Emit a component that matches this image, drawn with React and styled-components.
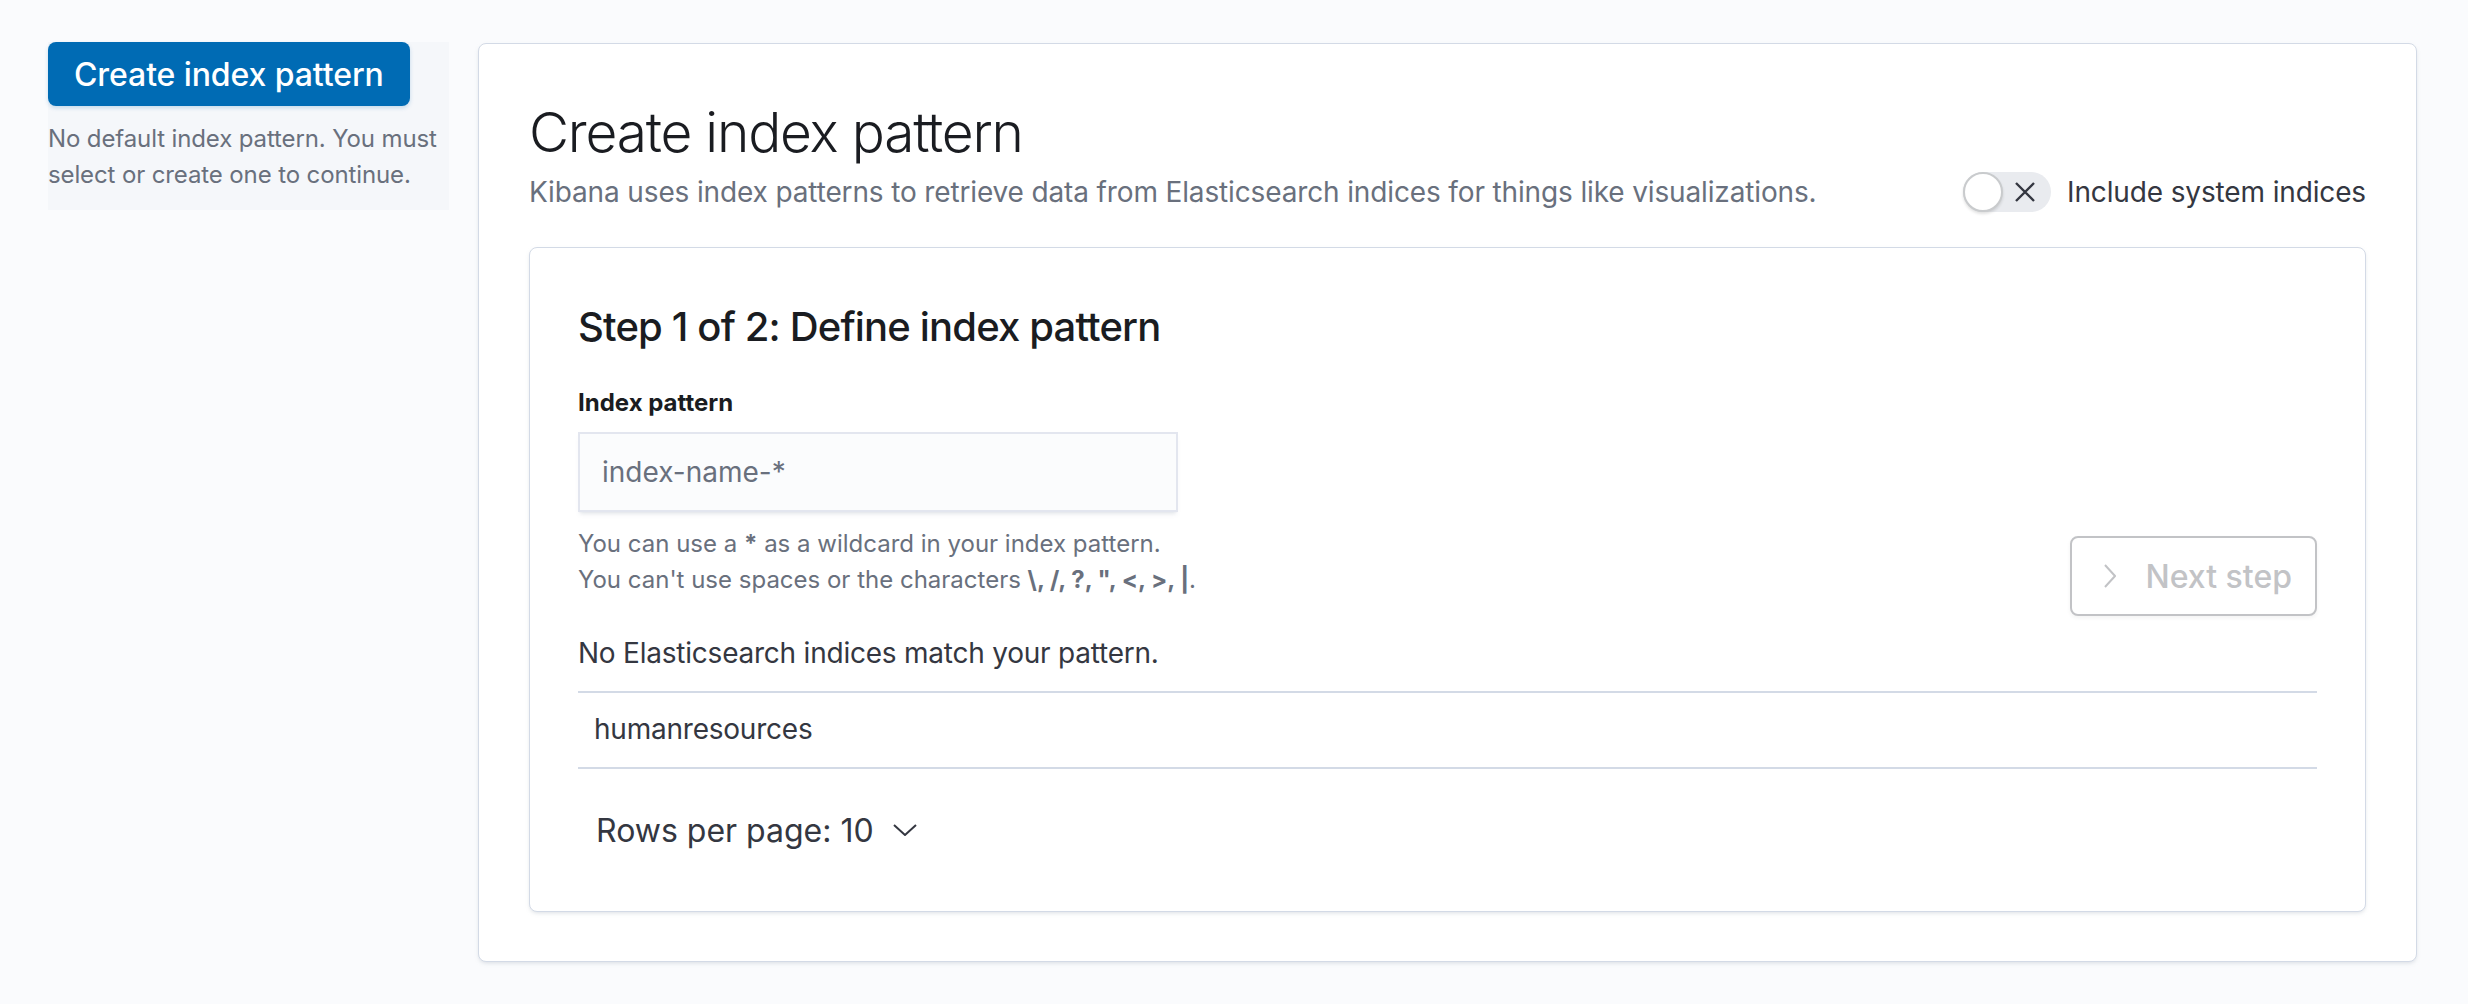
import React from 'react';
import styled, { createGlobalStyle } from 'styled-components';

const GlobalStyle = createGlobalStyle`
  html, body { margin: 0; padding: 0; background: #fafbfd; }
  body {
    font-family: Inter, "Noto Sans", "Liberation Sans", sans-serif;
    color: #343741;
    -webkit-font-smoothing: antialiased;
  }
  * { box-sizing: border-box; }
`;

const Page = styled.div`
  display: flex;
  align-items: flex-start;
  gap: 29px;
  padding: 42px 51px 40px 48px;
`;

const SideBar = styled.aside`
  width: 401px;
  flex: none;
  background: #f5f7fa;
  padding-bottom: 17px;
`;

const PrimaryButton = styled.button`
  height: 64px;
  padding: 0 26px;
  border: none;
  border-radius: 8px;
  background: #006bb4;
  color: #fff;
  font-family: inherit;
  font-size: 32px;
  font-weight: 500;
  letter-spacing: -0.003em;
  box-shadow: 0 2px 4px rgba(0, 107, 180, 0.2);
  cursor: pointer;
`;

const SideNote = styled.p`
  margin: 15px 0 0;
  font-size: 24px;
  line-height: 36px;
  letter-spacing: -0.005em;
  color: #69707d;
`;

const MainPanel = styled.main`
  flex: 1;
  margin-top: 1px;
  background: #fff;
  border: 1px solid #d3dae6;
  border-radius: 8px;
  box-shadow: 0 2px 4px -1px rgba(152, 162, 179, 0.35);
  padding: 48px 50px 49px 50px;
`;

const Header = styled.header`
  display: flex;
  justify-content: space-between;
  align-items: flex-end;
`;

const Title = styled.h1`
  margin: 0;
  font-size: 55px;
  font-weight: 300;
  line-height: 80px;
  letter-spacing: -0.022em;
  color: #1a1c21;
`;

const Subtitle = styled.p`
  margin: -1px 0 0;
  font-size: 28px;
  line-height: 42px;
  letter-spacing: -0.005em;
  color: #69707d;
`;

const ToggleRow = styled.label`
  display: flex;
  align-items: center;
  gap: 16px;
  height: 42px;
  font-size: 28px;
  letter-spacing: -0.005em;
  color: #343741;
`;

const SwitchTrack = styled.span`
  position: relative;
  display: flex;
  align-items: center;
  justify-content: flex-end;
  width: 88px;
  height: 40px;
  padding-right: 16px;
  border-radius: 20px;
  background: #e9ebef;
`;

const SwitchKnob = styled.span`
  position: absolute;
  left: 0;
  top: 0;
  width: 40px;
  height: 40px;
  border-radius: 50%;
  background: #fff;
  border: 2px solid #c9cbcd;
  box-shadow: 0 2px 3px rgba(0, 0, 0, 0.12);
`;

const InnerPanel = styled.section`
  margin-top: 34px;
  background: #fff;
  border: 1px solid #d3dae6;
  border-radius: 8px;
  box-shadow: 0 2px 4px -1px rgba(152, 162, 179, 0.35);
  padding: 51px 48px 57px;
`;

const StepTitle = styled.h2`
  margin: 0;
  font-size: 40px;
  font-weight: 500;
  line-height: 56px;
  letter-spacing: -0.021em;
  color: #1a1c21;
`;

const FormSection = styled.div`
  display: flex;
  justify-content: space-between;
  align-items: flex-start;
  margin-top: 30px;
`;

const FormRow = styled.div`
  display: flex;
  flex-direction: column;
`;

const Label = styled.label`
  font-size: 24px;
  font-weight: 700;
  line-height: 36px;
  color: #1a1c21;
  margin-bottom: 11px;
`;

const TextInput = styled.input`
  width: 600px;
  height: 80px;
  padding: 0 24px;
  border: none;
  border-radius: 0;
  background: #fbfcfd;
  font-family: inherit;
  font-size: 28px;
  color: #343741;
  box-shadow: 0 1px 1px -1px rgba(152, 162, 179, 0.2),
    0 4px 4px -2px rgba(152, 162, 179, 0.25),
    inset 0 0 0 2px rgba(15, 39, 118, 0.1);
  outline: none;
  &::placeholder { color: #69707d; }
`;

const HelpText = styled.div`
  margin-top: 14px;
  font-size: 24px;
  line-height: 36px;
  color: #69707d;
  strong { font-weight: 700; }
`;

const NextButton = styled.button`
  display: flex;
  align-items: center;
  gap: 29px;
  margin-top: 151px;
  height: 80px;
  padding: 0 23px 0 32px;
  background: #fff;
  border: 2px solid #c2c3c6;
  border-radius: 8px;
  color: #c2c3c6;
  font-family: inherit;
  font-size: 32px;
  font-weight: 500;
  box-shadow: 0 2px 4px rgba(0, 0, 0, 0.05);
  cursor: not-allowed;
`;

const NoMatch = styled.p`
  margin: 16px 0 0;
  font-size: 28px;
  line-height: 42px;
  letter-spacing: -0.008em;
  color: #343741;
`;

const Table = styled.div`
  margin-top: 17px;
  border-top: 2px solid #d3dae6;
`;

const Row = styled.div`
  display: flex;
  align-items: center;
  height: 76px;
  padding: 0 16px 2px;
  border-bottom: 2px solid #d3dae6;
  font-size: 28px;
  letter-spacing: -0.008em;
  color: #343741;
`;

const Pagination = styled.button`
  display: flex;
  align-items: center;
  gap: 19px;
  margin-top: 37px;
  padding: 0 0 0 18px;
  height: 48px;
  background: none;
  border: none;
  font-family: inherit;
  font-size: 32px;
  color: #343741;
  cursor: pointer;
`;

const Chevron = ({ dir, color, w, h }) => (
  <svg width={w} height={h} viewBox={`0 0 ${w} ${h}`} fill="none">
    {dir === 'down' ? (
      <polyline points={`1,1 ${w / 2},${h - 1} ${w - 1},1`} stroke={color} strokeWidth="2" />
    ) : (
      <polyline points={`1,1 ${w - 1},${h / 2} 1,${h - 1}`} stroke={color} strokeWidth="2" />
    )}
  </svg>
);

const CrossIcon = () => (
  <svg width="20" height="20" viewBox="0 0 20 20">
    <path d="M1 1 L19 19 M19 1 L1 19" stroke="#343741" strokeWidth="2.4" />
  </svg>
);

export default function App() {
  return (
    <>
      <GlobalStyle />
      <Page>
        <SideBar>
          <PrimaryButton>Create index pattern</PrimaryButton>
          <SideNote>No default index pattern. You must select or create one to continue.</SideNote>
        </SideBar>
        <MainPanel>
          <Header>
            <div>
              <Title>Create index pattern</Title>
              <Subtitle>
                Kibana uses index patterns to retrieve data from Elasticsearch indices for things like visualizations.
              </Subtitle>
            </div>
            <ToggleRow>
              <SwitchTrack>
                <SwitchKnob />
                <CrossIcon />
              </SwitchTrack>
              Include system indices
            </ToggleRow>
          </Header>
          <InnerPanel>
            <StepTitle>Step 1 of 2: Define index pattern</StepTitle>
            <FormSection>
              <FormRow>
                <Label htmlFor="ip">Index pattern</Label>
                <TextInput id="ip" placeholder="index-name-*" />
                <HelpText>
                  <div>You can use a <strong>*</strong> as a wildcard in your index pattern.</div>
                  <div>
                    You can't use spaces or the characters <strong>\, /, ?, ", &lt;, &gt;, |</strong>.
                  </div>
                </HelpText>
              </FormRow>
              <NextButton disabled>
                <Chevron dir="right" color="#c2c3c6" w={12} h={24} />
                Next step
              </NextButton>
            </FormSection>
            <NoMatch>No Elasticsearch indices match your pattern.</NoMatch>
            <Table>
              <Row>humanresources</Row>
            </Table>
            <Pagination>
              Rows per page: 10
              <Chevron dir="down" color="#343741" w={24} h={12} />
            </Pagination>
          </InnerPanel>
        </MainPanel>
      </Page>
    </>
  );
}
